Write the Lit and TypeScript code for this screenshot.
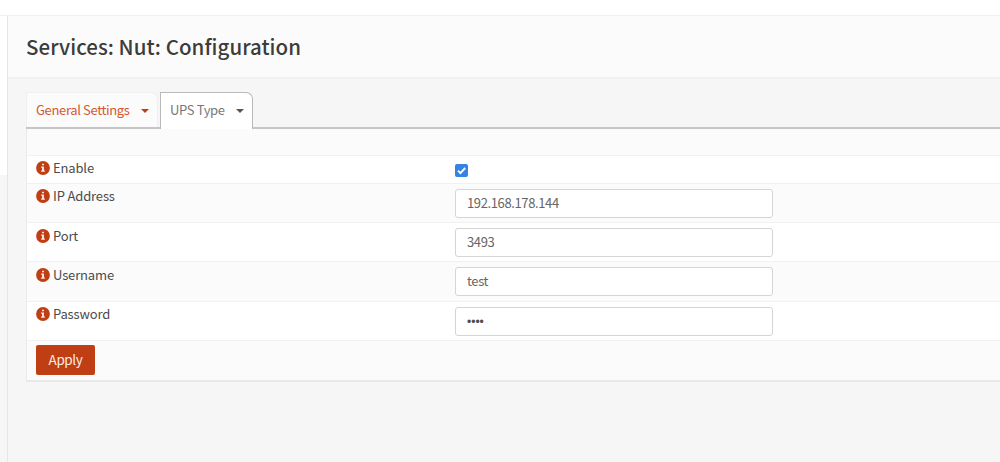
import { LitElement, html, css, svg } from 'lit';
import { customElement } from 'lit/decorators.js';

const infoIcon = html`
  <svg class="info" viewBox="0 0 14 14" width="14" height="14">
    <circle cx="7" cy="7" r="6.9" fill="#c03e14" />
    ${svg`<path fill="#f8e4dc" d="M6 2.7h2v1.6H6zM5.1 5.4h2.9v4h.9v1.3H5.1V9.4H6V6.7h-.9z" />`}
  </svg>
`;

@customElement('app-root')
export class AppRoot extends LitElement {

  fields = [
    { label: 'IP Address', type: 'text', value: '192.168.178.144' },
    { label: 'Port', type: 'text', value: '3493' },
    { label: 'Username', type: 'text', value: 'test' },
    { label: 'Password', type: 'password', value: 'test' },
  ];

  static styles = css`
    :host {
      display: flex;
      flex-direction: column;
      height: 462px;
      overflow: hidden;
      background: #f6f6f6;
      color: #4c4c4c;
      font-family: "Noto Sans CJK SC", "Noto Sans", sans-serif;
      font-size: 13px;
      line-height: 18px;
    }

    * {
      box-sizing: border-box;
    }

    .topbar {
      flex: none;
      height: 16px;
      background: #fff;
      border-bottom: 1px solid #f1f1f1;
    }

    .page {
      flex: 1;
      display: flex;
    }

    .sidebar {
      flex: none;
      width: 8px;
      border-right: 1px solid #e6e6e6;
    }

    .menu {
      height: 159px;
      background: #fff;
    }

    main {
      flex: 1;
    }

    header {
      height: 63px;
      padding: 16px 0 0 18px;
      background: #fbfbfb;
      border-bottom: 2px solid #f1f1f1;
    }

    h1 {
      margin: 0;
      font-size: 20.5px;
      font-weight: 500;
      line-height: 28px;
      letter-spacing: 0.04px;
      color: #3c3c3b;
      white-space: nowrap;
    }

    .content {
      padding: 13px 0 0 18px;
    }

    .tabs {
      display: flex;
      height: 37px;
      border-bottom: 2px solid #c6c6c6;
    }

    .tab {
      display: flex;
      align-items: center;
      height: 35px;
      border: 1px solid #f0f0f0;
      border-bottom: 0;
      border-radius: 0 7px 0 0;
      padding: 0 0 0 9px;
      width: 132px;
      margin-right: 2px;
      background: #fbfbfb;
      color: #d4572f;
      letter-spacing: -0.35px;
    }

    .tab.active {
      width: 93px;
      height: 37px;
      padding-bottom: 2px;
      border-color: #b9b9b9;
      border-right-width: 1.5px;
      background: #fff;
      color: #777;
    }

    .caret {
      margin: 2px 0 0 11px;
      border: 4px solid transparent;
      border-top-color: #c03e14;
      border-bottom: 0;
    }

    .active .caret {
      border-top-color: #555;
    }

    .panel {
      border-left: 1px solid #ebebeb;
      border-bottom: 2px solid #e9e9e9;
    }

    .row {
      display: flex;
      height: 39px;
      padding: 5px 0 0 9px;
      border-bottom: 1px solid #f1f1f1;
      background: #fff;
    }

    .row.odd {
      background: #fbfbfb;
    }

    .row.blank {
      height: 27px;
    }

    .row.short {
      height: 28px;
    }

    .row.tall {
      height: 40px;
    }

    .row.last {
      height: 39px;
      border-bottom: 0;
    }

    .label {
      display: flex;
      align-items: flex-start;
      width: 419px;
      height: 18px;
      margin-top: -2px;
      letter-spacing: -0.15px;
    }

    .label.low {
      margin-top: -1px;
    }

    .info {
      margin: 2px 3px 0 0;
    }

    .check {
      width: 13px;
      height: 13px;
      margin-top: 3px;
    }

    input[type="text"],
    input[type="password"] {
      width: 318px;
      height: 29px;
      margin: 0;
      padding: 0 11px 2px;
      border: 1px solid #d5d5d5;
      border-radius: 3px;
      background: #fff;
      color: #666;
      font: inherit;
      letter-spacing: -0.38px;
      outline: none;
    }

    input[type="password"] {
      padding-bottom: 0;
      color: #4c4c4c;
      font-family: "Liberation Sans", sans-serif;
      font-size: 12px;
      letter-spacing: 0;
    }

    button {
      width: 59px;
      height: 30px;
      margin-top: -1px;
      padding: 0 0 2px;
      border: 0;
      border-radius: 2px;
      background: #c03e14;
      color: #fbeae4;
      font: inherit;
      font-size: 13.5px;
      letter-spacing: -0.4px;
    }
  `;

  render() {
    return html`
      <div class="topbar"></div>
      <div class="page">
        <div class="sidebar"><div class="menu"></div></div>
        <main>
          <header><h1>Services: Nut: Configuration</h1></header>
          <div class="content">
            <div class="tabs">
              <div class="tab"><span>General Settings</span><i class="caret"></i></div>
              <div class="tab active"><span>UPS Type</span><i class="caret"></i></div>
            </div>
            <div class="panel">
              <div class="row odd blank"></div>
              <div class="row short">
                <div class="label">${infoIcon}<span>Enable</span></div>
                <svg class="check" viewBox="0 0 13 13">
                  <rect width="13" height="13" rx="2" fill="#3584e4" />
                  <path d="M3 6.7l2.4 2.4L10.2 4" fill="none" stroke="#fff" stroke-width="1.9" />
                </svg>
              </div>
              ${this.fields.map((field, i) => html`
                <div class="row ${i % 2 ? '' : 'odd'} ${i === 2 ? 'tall' : ''}">
                  <div class="label ${i === 1 || i === 2 ? 'low' : ''}">${infoIcon}<span>${field.label}</span></div>
                  <input type=${field.type} .value=${field.value}>
                </div>
              `)}
              <div class="row odd last"><button>Apply</button></div>
            </div>
          </div>
        </main>
      </div>
    `;
  }
}
